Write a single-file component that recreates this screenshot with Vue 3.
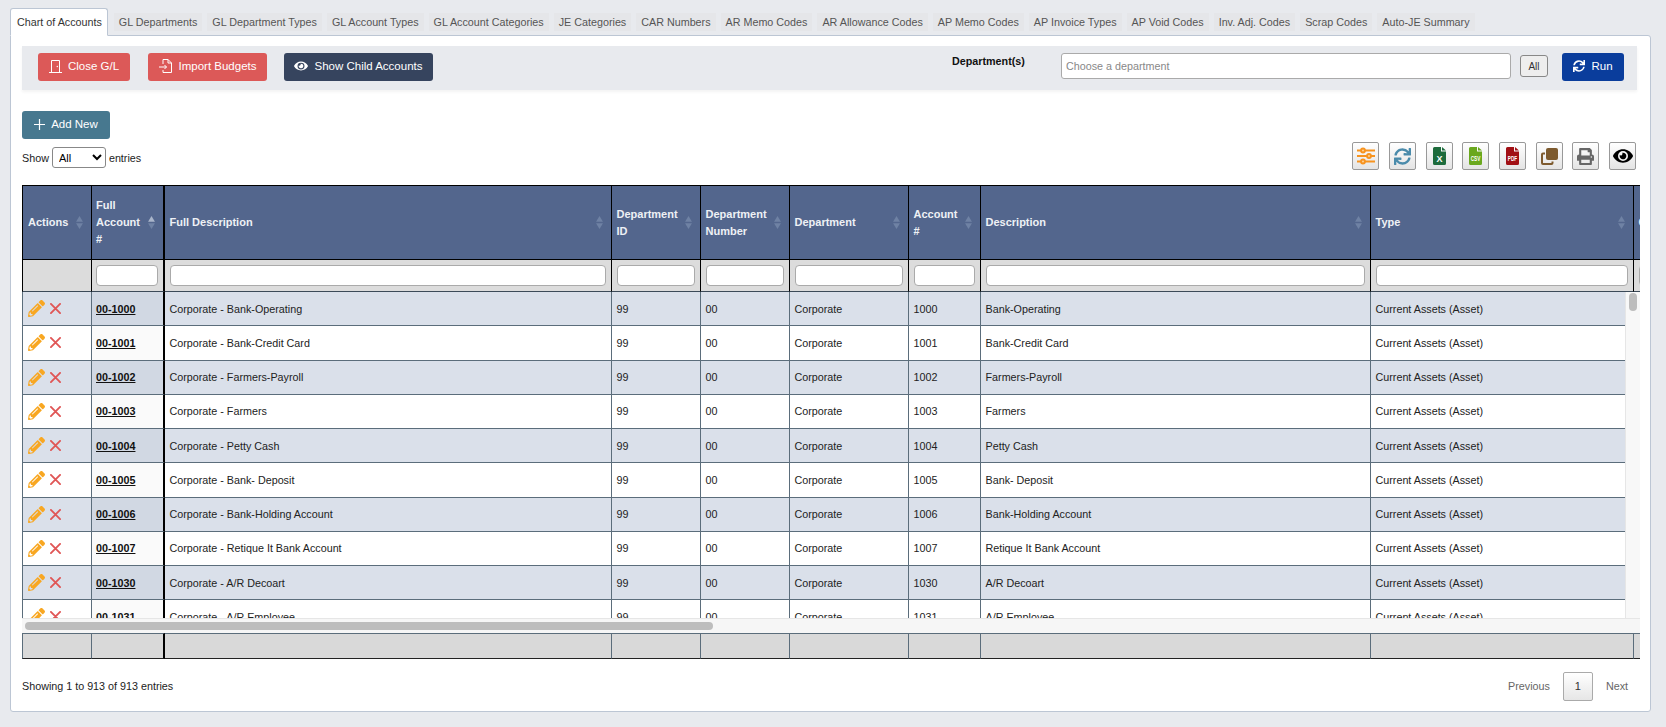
<script setup>
const tabs = [
  "Chart of Accounts", "GL Departments", "GL Department Types", "GL Account Types",
  "GL Account Categories", "JE Categories", "CAR Numbers", "AR Memo Codes",
  "AR Allowance Codes", "AP Memo Codes", "AP Invoice Types", "AP Void Codes",
  "Inv. Adj. Codes", "Scrap Codes", "Auto-JE Summary",
];

const columns = [
  { label: "Actions", width: 70 },
  { label: "Full Account #", width: 73, active: true },
  { label: "Full Description", width: 447 },
  { label: "Department ID", width: 89 },
  { label: "Department Number", width: 89 },
  { label: "Department", width: 119 },
  { label: "Account #", width: 72 },
  { label: "Description", width: 390 },
  { label: "Type", width: 263 },
  { label: "Category", width: 300 },
];

const accounts = [
  ["1000", "Bank-Operating"],
  ["1001", "Bank-Credit Card"],
  ["1002", "Farmers-Payroll"],
  ["1003", "Farmers"],
  ["1004", "Petty Cash"],
  ["1005", "Bank- Deposit"],
  ["1006", "Bank-Holding Account"],
  ["1007", "Retique It Bank Account"],
  ["1030", "A/R Decoart"],
  ["1031", "A/R Employee"],
];
</script>

<template>
  <div class="page">
    <ul class="tabs">
      <li v-for="(t, i) in tabs" :key="t" class="tab" :class="{ active: i === 0 }"><span>{{ t }}</span></li>
    </ul>
    <div class="panel">
      <div class="toolbar">
        <button class="btn red close-btn">
          <svg width="13" height="14" viewBox="0 0 13 14" fill="none" stroke="#fff" stroke-width="1"><path d="M0 13.5h13M2.5 13.5V1.5h8v12"/><circle cx="8.3" cy="7.5" r=".7" fill="#fff" stroke="none"/></svg>
          Close G/L
        </button>
        <button class="btn red import-btn">
          <svg width="14" height="14" viewBox="0 0 14 14" fill="none" stroke="#fff" stroke-width="1"><path d="M4 5V.5h5l3.5 3.5v9.5H4V11M9 .5V4h3.5M0 8h7.5M5.5 6l2 2-2 2"/></svg>
          Import Budgets
        </button>
        <button class="btn navy show-btn">
          <svg width="14" height="12" viewBox="0 0 576 512" preserveAspectRatio="none" fill="#fff"><path d="M572.52 241.4C518.29 135.59 410.93 64 288 64S57.68 135.64 3.48 241.41a32.35 32.35 0 0 0 0 29.19C57.71 376.41 165.07 448 288 448s230.32-71.64 284.52-177.41a32.35 32.35 0 0 0 0-29.19zM288 400a144 144 0 1 1 144-144 143.93 143.93 0 0 1-144 144zm0-240a95.31 95.31 0 0 0-25.31 3.79 47.85 47.85 0 0 1-66.9 66.9A95.78 95.78 0 1 0 288 160z"/></svg>
          Show Child Accounts
        </button>
        <label class="dept-label">Department(s)</label>
        <input class="dept-input" placeholder="Choose a department" />
        <button class="all-btn">All</button>
        <button class="btn blue run-btn">
          <svg width="12" height="12" viewBox="0 0 512 512" fill="#fff"><path d="M440.65 12.57l4 82.77A247.16 247.16 0 0 0 255.83 8C134.73 8 33.91 94.92 12.29 209.82A12 12 0 0 0 24.09 224h49.05a12 12 0 0 0 11.67-9.26 175.91 175.91 0 0 1 317-56.94l-101.46-4.86a12 12 0 0 0-12.57 12v47.41a12 12 0 0 0 12 12H500a12 12 0 0 0 12-12V12a12 12 0 0 0-12-12h-47.37a12 12 0 0 0-11.98 12.57zM255.83 432a175.61 175.61 0 0 1-146-77.8l101.8 4.87a12 12 0 0 0 12.57-12v-47.4a12 12 0 0 0-12-12H12a12 12 0 0 0-12 12V500a12 12 0 0 0 12 12h47.35a12 12 0 0 0 12-12.6l-4.15-82.57A247.17 247.17 0 0 0 255.83 504c121.11 0 221.93-86.92 243.55-201.82a12 12 0 0 0-11.8-14.18h-49.05a12 12 0 0 0-11.67 9.26A175.86 175.86 0 0 1 255.83 432z"/></svg>
          Run
        </button>
      </div>

      <button class="btn teal add-btn">
        <svg width="11" height="11" viewBox="0 0 11 11" stroke="#fff" stroke-width="1.2"><path d="M5.5 0v11M0 5.5h11"/></svg>
        Add New
      </button>

      <div class="controls">
        <div class="length">
          Show
          <select class="length-select"><option>All</option></select>
          entries
        </div>
        <div class="icons">
          <button class="icon-btn">
            <svg width="18" height="18" viewBox="0 0 18 18" stroke="#f7931e" stroke-width="2" fill="#fbd9a8"><path d="M0 3.5h18M0 9h18M0 14.5h18"/><circle cx="6" cy="3.5" r="1.9"/><circle cx="12" cy="9" r="1.9"/><circle cx="6" cy="14.5" r="1.9"/></svg>
          </button>
          <button class="icon-btn">
            <svg width="17" height="17" viewBox="0 0 512 512" fill="#4a8bab"><path d="M440.65 12.57l4 82.77A247.16 247.16 0 0 0 255.83 8C134.73 8 33.91 94.92 12.29 209.82A12 12 0 0 0 24.09 224h49.05a12 12 0 0 0 11.67-9.26 175.91 175.91 0 0 1 317-56.94l-101.46-4.86a12 12 0 0 0-12.57 12v47.41a12 12 0 0 0 12 12H500a12 12 0 0 0 12-12V12a12 12 0 0 0-12-12h-47.37a12 12 0 0 0-11.98 12.57zM255.83 432a175.61 175.61 0 0 1-146-77.8l101.8 4.87a12 12 0 0 0 12.57-12v-47.4a12 12 0 0 0-12-12H12a12 12 0 0 0-12 12V500a12 12 0 0 0 12 12h47.35a12 12 0 0 0 12-12.6l-4.15-82.57A247.17 247.17 0 0 0 255.83 504c121.11 0 221.93-86.92 243.55-201.82a12 12 0 0 0-11.8-14.18h-49.05a12 12 0 0 0-11.67 9.26A175.86 175.86 0 0 1 255.83 432z"/></svg>
          </button>
          <button class="icon-btn">
            <svg width="13" height="18" viewBox="0 0 13 18"><path d="M1.5 0H8v4.500h5V16.500A1.500 1.500 0 0 1 11.500 18h-10A1.500 1.500 0 0 1 0 16.500v-15A1.500 1.500 0 0 1 1.500 0zM9 0l4 3.500H9z" fill="#1d6b3c"/><text x="6.500" y="15" class="file-x">X</text></svg>
          </button>
          <button class="icon-btn">
            <svg width="13" height="18" viewBox="0 0 13 18"><path d="M1.500 0H8v4.500h5V16.500A1.500 1.500 0 0 1 11.500 18h-10A1.500 1.500 0 0 1 0 16.500v-15A1.500 1.500 0 0 1 1.500 0zM9 0l4 3.500H9z" fill="#6aa81e"/><text transform="translate(6.500 13.800) scale(.85 1.4)" class="file-txt">CSV</text></svg>
          </button>
          <button class="icon-btn">
            <svg width="13" height="18" viewBox="0 0 13 18"><path d="M1.500 0H8v4.500h5V16.500A1.500 1.500 0 0 1 11.500 18h-10A1.500 1.500 0 0 1 0 16.500v-15A1.500 1.500 0 0 1 1.500 0zM9 0l4 3.500H9z" fill="#a10f14"/><text transform="translate(6.500 13.800) scale(.85 1.4)" class="file-txt">PDF</text></svg>
          </button>
          <button class="icon-btn">
            <svg width="17" height="17" viewBox="0 0 17 17"><rect x="5" y="0" width="12" height="12" rx="2" fill="#7d5a2e"/><path d="M4 5.500H2a1 1 0 0 0-1 1V15a1 1 0 0 0 1 1h8.500a1 1 0 0 0 1-1v-1.500" fill="none" stroke="#7d5a2e" stroke-width="2"/></svg>
          </button>
          <button class="icon-btn">
            <svg width="17" height="17" viewBox="0 0 512 512" fill="#666"><path d="M448 192V77.25c0-8.49-3.37-16.62-9.37-22.63L393.37 9.37c-6-6-14.14-9.37-22.63-9.37H96C78.33 0 64 14.33 64 32v160c-35.35 0-64 28.65-64 64v112c0 8.84 7.16 16 16 16h48v96c0 17.67 14.33 32 32 32h320c17.67 0 32-14.33 32-32v-96h48c8.84 0 16-7.16 16-16V256c0-35.35-28.65-64-64-64zm-64 256H128v-96h256v96zm0-224H128V64h192v48c0 8.84 7.16 16 16 16h48v96zm48 72c-13.25 0-24-10.75-24-24 0-13.26 10.75-24 24-24s24 10.74 24 24c0 13.25-10.75 24-24 24z"/></svg>
          </button>
          <button class="icon-btn">
            <svg width="20" height="18" viewBox="0 0 576 512" fill="#000"><path d="M572.52 241.4C518.29 135.59 410.93 64 288 64S57.68 135.64 3.48 241.41a32.35 32.35 0 0 0 0 29.19C57.71 376.41 165.07 448 288 448s230.32-71.64 284.52-177.41a32.35 32.35 0 0 0 0-29.19zM288 400a144 144 0 1 1 144-144 143.93 143.93 0 0 1-144 144zm0-240a95.31 95.31 0 0 0-25.31 3.79 47.85 47.85 0 0 1-66.9 66.9A95.78 95.78 0 1 0 288 160z"/></svg>
          </button>
        </div>
      </div>

      <div class="dt">
        <div class="dt-head">
          <table>
            <colgroup><col v-for="c in columns" :key="c.label" :style="{ width: c.width + 'px' }" /></colgroup>
            <thead>
              <tr class="labels">
                <th v-for="c in columns" :key="c.label">
                  <div class="th-inner">
                    <span class="th-label">{{ c.label }}</span>
                    <svg class="sort" width="7" height="13" viewBox="0 0 8 15">
                      <path d="M4 0l4 6.500H0z" :fill="c.active ? '#a9b5ca' : '#6f82a4'" />
                      <path d="M4 15L0 8.500h8z" fill="#6f82a4" />
                    </svg>
                  </div>
                </th>
              </tr>
              <tr class="filters">
                <th v-for="(c, i) in columns" :key="c.label">
                  <input v-if="i > 0" class="filter-input" />
                </th>
              </tr>
            </thead>
          </table>
        </div>

        <div class="dt-middle">
          <div class="dt-body">
            <table>
              <colgroup><col v-for="c in columns" :key="c.label" :style="{ width: c.width + 'px' }" /></colgroup>
              <tbody>
                <tr v-for="(a, i) in accounts" :key="a[0]" :class="i % 2 === 0 ? 'odd' : 'even'">
                  <td class="actions">
                    <svg width="17" height="17" viewBox="0 0 512 512" fill="#f8a722"><path d="M497.9 142.1l-46.1 46.1c-4.7 4.7-12.3 4.7-17 0l-111-111c-4.7-4.7-4.7-12.3 0-17l46.1-46.1c18.7-18.7 49.1-18.7 67.9 0l60.1 60.1c18.8 18.700 18.800 49.100 0 67.900zM284.200 99.800L21.600 362.400.4 483.900c-2.900 16.400 11.400 30.600 27.800 27.800l121.500-21.300 262.600-262.600c4.300-4.300 4.300-11.300 0-15.600L301.900 99.800c-4.400-4.300-11.400-4.300-15.600 0zM124.100 339.900c-5.200-5.200-5.200-13.600 0-18.800l154-154c5.200-5.200 13.600-5.200 18.800 0s5.200 13.600 0 18.800l-154 154c-5.200 5.200-13.600 5.200-18.800 0zM88 424h48v36.300l-64.500 11.300-31.100-31.100L51.700 376H88v48z"/></svg>
                    <svg class="del" width="11" height="11" viewBox="0 0 12 12" stroke="#e05656" stroke-width="2" stroke-linecap="round"><path d="M1 1l10 10M11 1L1 11"/></svg>
                  </td>
                  <td class="acct"><a>00-{{ a[0] }}</a></td>
                  <td>Corporate - {{ a[1] }}</td>
                  <td>99</td>
                  <td>00</td>
                  <td>Corporate</td>
                  <td>{{ a[0] }}</td>
                  <td>{{ a[1] }}</td>
                  <td>Current Assets (Asset)</td>
                  <td></td>
                </tr>
              </tbody>
            </table>
          </div>
          <div class="v-track"><div class="v-thumb"></div></div>
        </div>

        <div class="h-track"><div class="h-thumb"></div></div>

        <div class="dt-foot">
          <table>
            <colgroup><col v-for="c in columns" :key="c.label" :style="{ width: c.width + 'px' }" /></colgroup>
            <tfoot>
              <tr><td v-for="c in columns" :key="c.label"></td></tr>
            </tfoot>
          </table>
        </div>
      </div>

      <div class="dt-bottom">
        <div class="info">Showing 1 to 913 of 913 entries</div>
        <div class="pager">
          <span>Previous</span>
          <button class="page-btn">1</button>
          <span>Next</span>
        </div>
      </div>
    </div>
  </div>
</template>

<style>
body {
  margin: 0;
  background: #e8eaee;
}
</style>

<style scoped>
.page {
  width: 1666px;
  height: 727px;
  padding: 8px 15px 0 10px;
  box-sizing: border-box;
  background: #e8eaee;
  font-family: "Liberation Sans", Arial, sans-serif;
  font-size: 10.75px;
  color: #222;
  overflow: hidden;
}
.tabs {
  list-style: none;
  margin: 0 0 -1px;
  padding: 0;
  display: flex;
  height: 28px;
  position: relative;
  z-index: 1;
}
.tab {
  font-size: 10.75px;
  color: #555;
  margin-right: 5px;
  display: flex;
  align-items: center;
  white-space: nowrap;
}
.tab span {
  background: #e5e6e9;
  padding: 3px 5px;
}
.tab.active {
  background: #fff;
  border: 1px solid #bcc6d4;
  border-bottom: 1px solid #fff;
  border-radius: 3px 3px 0 0;
  color: #333;
  margin-right: 6px;
}
.tab.active span {
  background: none;
  padding-left: 6px;
}
.panel {
  background: #fff;
  border: 1px solid #bcc6d4;
  border-radius: 0 3px 3px 3px;
  height: 677px;
  box-sizing: border-box;
  padding: 10px 10px 0 11px;
}
.toolbar {
  display: flex;
  align-items: flex-start;
  width: 1615px;
  height: 44px;
  padding-top: 7px;
  padding-left: 16px;
  box-sizing: border-box;
  background: #e8eaee;
  box-shadow: 0 2px 3px rgba(0, 0, 0, 0.05);
}
.btn {
  display: inline-flex;
  align-items: center;
  justify-content: center;
  gap: 6px;
  height: 28px;
  border: none;
  border-radius: 3px;
  color: #fff;
  font-family: inherit;
  font-size: 11.5px;
  padding: 0 0 2px;
}
.red { background: #dc5958; }
.navy { background: #36445e; }
.blue { background: #0a3d9c; }
.teal { background: #47788f; }
.close-btn { width: 92px; margin-right: 18px; }
.import-btn { width: 119px; margin-right: 17px; }
.show-btn { width: 149px; }
.dept-label {
  font-weight: bold;
  margin-left: 519px;
  margin-top: 2px;
  width: 109px;
  color: #111;
}
.dept-input {
  width: 450px;
  height: 26px;
  box-sizing: border-box;
  border: 1px solid #aaa;
  border-radius: 3px;
  padding: 0 4px;
  font-family: inherit;
  font-size: 10.75px;
}
.dept-input::placeholder { color: #888; }
.all-btn {
  width: 28px;
  height: 22px;
  margin: 2px 14px 0 9px;
  padding: 0;
  background: #eee;
  border: 1px solid #888;
  border-radius: 3px;
  font-family: inherit;
  font-size: 10px;
  color: #333;
}
.run-btn { width: 62px; }
.add-btn {
  display: flex;
  width: 88px;
  margin-top: 21px;
}
.controls {
  display: flex;
  justify-content: space-between;
  align-items: flex-start;
  width: 1614px;
  height: 43px;
  margin-top: 3px;
}
.length {
  display: flex;
  align-items: center;
  gap: 3px;
  margin-top: 5px;
}
.length-select {
  width: 54px;
  height: 21px;
  font-family: inherit;
  font-size: 11px;
  background: #fff;
  border: 1px solid #888;
  border-radius: 3px;
  padding-left: 2px;
}
.icons {
  display: flex;
  gap: 9.7px;
}
.icon-btn {
  width: 27px;
  height: 28px;
  padding: 0;
  display: flex;
  align-items: center;
  justify-content: center;
  background: linear-gradient(#fff, #e4e4e4);
  border: 1px solid #999;
  border-radius: 2px;
}
.file-x {
  font: bold 9px "Liberation Sans", Arial, sans-serif;
  fill: #fff;
  text-anchor: middle;
}
.file-txt {
  font: bold 5.5px "Liberation Sans", Arial, sans-serif;
  fill: #fff;
  text-anchor: middle;
}
.dt {
  width: 1618px;
}
.dt-head, .dt-foot, .dt-body {
  overflow: hidden;
}
table {
  table-layout: fixed;
  width: 1912px;
  border-collapse: separate;
  border-spacing: 0;
}
th, td {
  box-sizing: border-box;
  padding: 0 5px 0 4.5px;
  overflow: hidden;
  white-space: nowrap;
}
th:first-child, td:first-child {
  padding-left: 5px;
}
th:nth-child(2), td:nth-child(2) {
  padding-left: 4px;
}
.labels th {
  height: 75px;
  background: #53668d;
  color: #eef1f5;
  text-align: left;
  font-size: 11px;
  line-height: 17px;
  border-top: 1px solid #000;
  border-right: 1px solid #000;
  border-bottom: 1px solid #000;
}
.labels th:first-child, .filters th:first-child, td:first-child {
  border-left: 1px solid #000;
}
.labels th:nth-child(2), .filters th:nth-child(2), td:nth-child(2) {
  border-right: 2px solid #000;
}
.th-inner {
  display: flex;
  align-items: center;
  justify-content: space-between;
  padding-right: 3px;
}
.th-label {
  white-space: normal;
}
.sort {
  flex: none;
  margin-left: 3px;
}
.filters th {
  height: 32px;
  background: #dcdcdc;
  border-right: 1px solid #000;
  border-bottom: 1px solid #3c4a58;
}
.filter-input {
  display: block;
  width: 100%;
  height: 21px;
  box-sizing: border-box;
  border: 1px solid #aaa;
  border-radius: 4px;
  background: #fff;
}
.dt-middle {
  display: flex;
  height: 326px;
}
.dt-body {
  width: 1603px;
}
.v-track {
  width: 15px;
  background: #f8f8f8;
  border-left: 1px solid #e6e6e6;
  box-sizing: border-box;
  padding: 1px 3px 0 3px;
}
.v-thumb {
  height: 18px;
  background: #bdbdbd;
  border-radius: 4px;
}
td {
  height: 34.25px;
  border-right: 1px solid #5b6d7b;
  border-bottom: 1px solid #5b6d7b;
  color: #222;
}
td:first-child { border-left-color: #5b6d7b; }
.odd td { background: #dae0ea; }
.even td { background: #fff; }
.odd .acct { background: #d1d8e3; }
.even .acct { background: #fafafa; }
.acct a {
  font-weight: bold;
  text-decoration: underline;
  color: #111;
}
.actions svg {
  vertical-align: middle;
}
.del {
  margin-left: 5px;
}
.h-track {
  height: 15px;
  background: #f6f6f6;
  border-top: 1px solid #e6e6e6;
  box-sizing: border-box;
  padding: 3px 3px 0;
}
.h-thumb {
  width: 688px;
  height: 8px;
  background: #bdbdbd;
  border-radius: 4px;
}
.dt-foot td {
  height: 26px;
  background: #d9d9d9;
  border-top: 1px solid #5b6d7b;
  border-bottom: 1px solid #222;
}
.dt-bottom {
  display: flex;
  justify-content: space-between;
  align-items: center;
  width: 1614px;
  height: 42px;
  margin-top: 6px;
}
.pager {
  display: flex;
  align-items: center;
  gap: 13px;
  margin-right: 8px;
  color: #666;
}
.page-btn {
  width: 30px;
  height: 29px;
  padding: 0;
  background: linear-gradient(#fff, #e6e6e6);
  border: 1px solid #aaa;
  border-radius: 2px;
  font-family: inherit;
  font-size: 11px;
  color: #333;
}
</style>
